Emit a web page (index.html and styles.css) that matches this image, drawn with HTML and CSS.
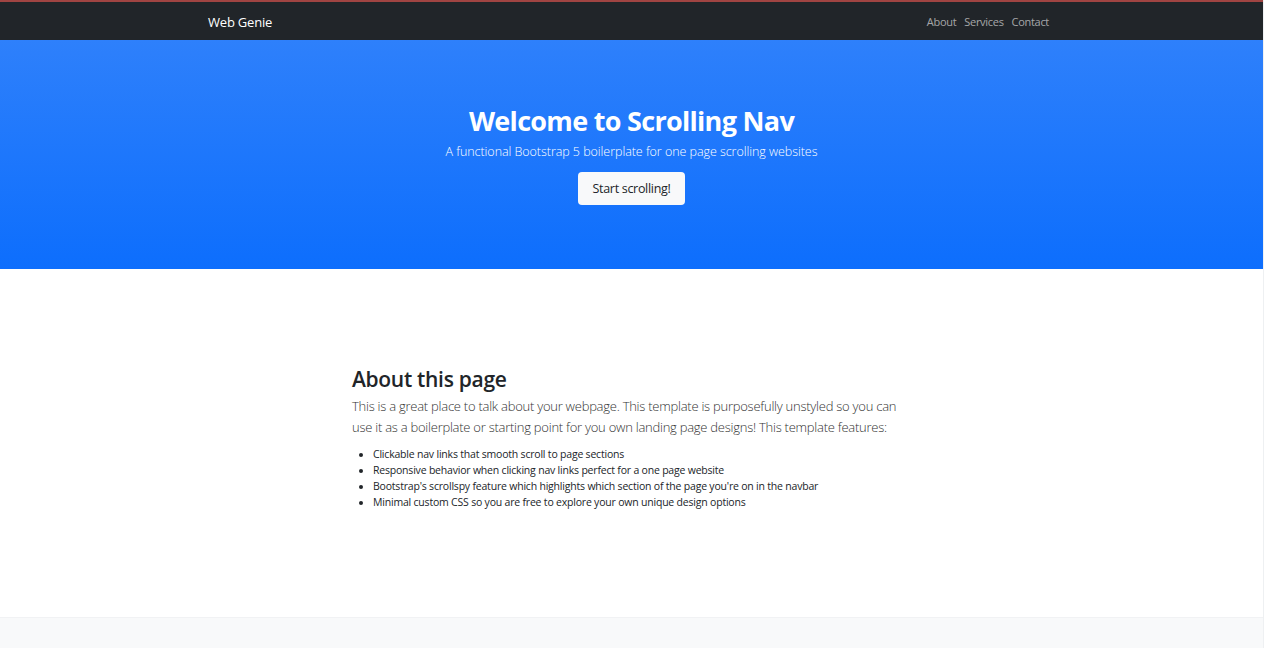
FILE: index.html
```html
<!DOCTYPE html>
<html lang="en">
<head>
<meta charset="utf-8">
<title>Scrolling Nav</title>
<link rel="stylesheet" href="styles.css">
</head>
<body>
<nav class="navbar">
  <div class="nav-inner">
    <a class="brand" href="#">Web Genie</a>
    <ul class="nav-links">
      <li><a href="#about">About</a></li>
      <li><a href="#services">Services</a></li>
      <li><a href="#contact">Contact</a></li>
    </ul>
  </div>
</nav>
<header class="hero">
  <h1 class="hero-title">Welcome to Scrolling Nav</h1>
  <p class="hero-lead">A functional Bootstrap 5 boilerplate for one page scrolling websites</p>
  <a class="btn-light" href="#about">Start scrolling!</a>
</header>
<section class="about" id="about">
  <div class="about-inner">
    <h2 class="about-title">About this page</h2>
    <p class="lead">This is a great place to talk about your webpage. This template is purposefully unstyled so you can use it as a boilerplate or starting point for you own landing page designs! This template features:</p>
    <ul class="features">
      <li>Clickable nav links that smooth scroll to page sections</li>
      <li>Responsive behavior when clicking nav links perfect for a one page website</li>
      <li>Bootstrap's scrollspy feature which highlights which section of the page you're on in the navbar</li>
      <li>Minimal custom CSS so you are free to explore your own unique design options</li>
    </ul>
  </div>
</section>
<section class="services" id="services"></section>
</body>
</html>
```
FILE: styles.css
```css
* { box-sizing: border-box; }
html, body { margin: 0; padding: 0; }
body {
  font-family: "Open Sans", "Noto Sans", "Liberation Sans", sans-serif;
  color: #212529;
  background: #fff;
  border-right: 1px solid #eef0f2;
}
a { text-decoration: none; }

.navbar {
  background: #212529;
  border-top: 2px solid #a04442;
  height: 40px;
}
.nav-inner {
  height: 100%;
  padding: 0 214px 0 208px;
  display: flex;
  align-items: center;
  justify-content: space-between;
}
.brand {
  color: #fff;
  font-size: 13px;
  letter-spacing: -0.2px;
  padding-top: 1px;
}
.nav-links {
  list-style: none;
  margin: 0;
  padding: 0 0 2px;
  display: flex;
  gap: 8px;
}
.nav-links a {
  color: rgba(255,255,255,0.6);
  font-size: 11px;
  letter-spacing: -0.3px;
}

.hero {
  height: 229px;
  background: linear-gradient(180deg, #2e80fb 0%, #0d6efd 100%);
  color: #fff;
  display: flex;
  flex-direction: column;
  align-items: center;
  padding-top: 64px;
}
.hero-title {
  margin: 0;
  font-size: 27px;
  line-height: 34px;
  font-weight: 700;
  letter-spacing: -0.7px;
}
.hero-lead {
  margin: 5px 0 0;
  font-size: 12.5px;
  line-height: 18px;
  font-weight: 300;
  letter-spacing: -0.05px;
}
.btn-light {
  margin-top: 11px;
  width: 107px;
  height: 33px;
  display: flex;
  align-items: center;
  justify-content: center;
  background: #f8f9fa;
  color: #212529;
  border-radius: 4px;
  font-size: 12.5px;
  letter-spacing: -0.3px;
}

.about {
  height: 348px;
  padding-top: 96px;
}
.about-inner {
  margin-left: 352px;
  width: 560px;
}
.about-title {
  margin: 0;
  font-size: 21px;
  line-height: 28px;
  font-weight: 600;
  letter-spacing: -0.3px;
}
.lead {
  margin: 3px 0 8px;
  font-size: 13px;
  line-height: 21px;
  font-weight: 300;
  color: #333;
  letter-spacing: -0.25px;
}
.features {
  margin: 0;
  padding-left: 21px;
  font-size: 10.5px;
  line-height: 16px;
  letter-spacing: -0.2px;
}
.services {
  height: 40px;
  background: #f8f9fa;
  border-top: 1px solid #f1f2f4;
}
```
